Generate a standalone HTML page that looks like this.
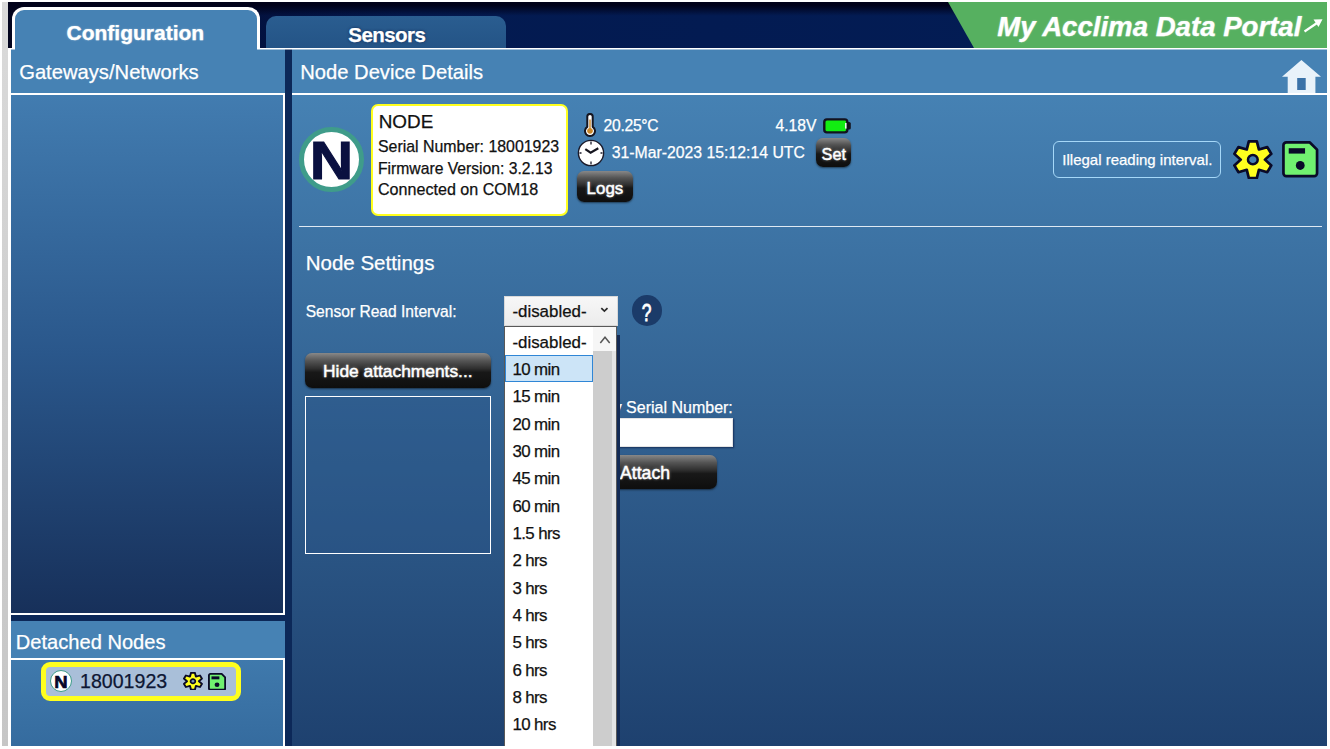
<!DOCTYPE html>
<html><head><meta charset="utf-8"><title>Acclima</title>
<style>
*{box-sizing:border-box;margin:0;padding:0}
html,body{width:1330px;height:749px;overflow:hidden;background:#fff}
body{position:relative;font-family:"Liberation Sans",sans-serif;color:#fff;-webkit-text-stroke:0.25px currentColor}
.abs{position:absolute}
.t{position:absolute;white-space:nowrap;line-height:1}
#strip{left:2px;top:2px;width:6px;height:744px;background:linear-gradient(#dadada,#d0d0d0 40%,#c6c6c6)}
#app{left:8px;top:2px;width:1319px;height:744px;background:#0c2858;overflow:hidden}
#topbar{left:0;top:0;width:1319px;height:46px;background:linear-gradient(180deg,#01021a 0,#01021a 7%,rgba(1,2,26,0) 30%),linear-gradient(90deg,#02041e 0%,#020c34 12%,#031a50 30%,#031d56 100%)}
#green{left:0;top:0;width:1319px;height:46px}
#tab1{left:4px;top:5px;width:247.5px;height:42px;border:3px solid #fff;border-bottom:none;border-radius:12px 12px 0 0;background:#4682b4}
#tab2{left:258px;top:14px;width:240px;height:32px;border-radius:10px 10px 0 0;background:linear-gradient(#2a5d90,#245486)}
.glow{text-shadow:0 0 2px rgba(255,255,255,.45)}
.hl{top:46px;height:2px;background:linear-gradient(#fff 0,#fff 50%,rgba(255,255,255,.5) 50%,rgba(255,255,255,.5) 100%)}
#left{left:0;top:46px;width:277px;height:567px;background:#4682b4;border-left:3px solid #fff}
#lbody{left:0;top:45px;width:274px;height:522px;border:solid #fff;border-width:2px 2px 2px 0;background:linear-gradient(#427cb0,#2a578b 50%,#17305a)}
#det{left:0;top:619px;width:277px;height:125px;background:#4682b4;border-left:3px solid #fff}
#dbody{left:0;top:37px;width:274px;height:90px;border-top:2px solid #fff;border-right:2px solid #fff;background:linear-gradient(#3f79ac,#356b9e)}
#main{left:284px;top:47px;width:1035px;height:697px;background:linear-gradient(#4682b4 0,#4682b4 40px,#1e416f 100%)}
.btn{position:absolute;border-radius:7px;background:linear-gradient(#888 0,#555 22%,#2e2e2e 45%,#181818 55%,#0e0e0e 100%);box-shadow:0 1px 2px rgba(0,0,0,.5)}
.btn .t{-webkit-text-stroke:0.45px #fff;text-shadow:0 0 3px rgba(255,255,255,.55)}
.dk{color:#111}
</style></head><body>
<div id="strip" class="abs"></div>
<div id="app" class="abs">
 <div id="topbar" class="abs"></div>
 <svg id="green" class="abs" viewBox="0 0 1319 46"><polygon points="940,0 1319,0 1319,46 966,46" fill="#56b060"/></svg>
 <div class="t glow" id="portal" style="left:989.2px;top:11px;font-size:27.6px;font-weight:bold;font-style:italic">My Acclima Data Portal</div>
 <svg class="abs" style="left:1295px;top:16px" width="21" height="15" viewBox="0 0 21 15"><path d="M1.5 13.5 L17 3" stroke="#fff" stroke-width="2.2" fill="none"/><path d="M10.5 1.5 L19.5 1.2 L15.5 9 Z" fill="#fff"/></svg>
 <div id="tab2" class="abs"></div>
 <div class="t glow" id="tsens" style="left:340.3px;top:23px;font-size:20.5px;font-weight:bold;letter-spacing:-0.55px;text-shadow:0 0 3px rgba(0,16,56,.7)">Sensors</div>
 <div id="left" class="abs">
   <div id="lbody" class="abs"></div>
 </div>
 <div class="t" id="tgw" style="left:11.2px;top:60px;font-size:20.2px">Gateways/Networks</div>
 <div id="tab1" class="abs"></div>
 <div class="t glow" id="tconf" style="left:58.5px;top:20px;font-size:21px;font-weight:bold">Configuration</div>
 <div id="det" class="abs">
   <div id="dbody" class="abs"></div>
 </div>
 <div class="t" id="tdet" style="left:7.8px;top:630px;font-size:20.1px">Detached Nodes</div>
 <!-- detached node item -->
 <div class="abs" id="dnode" style="left:33px;top:660px;width:200px;height:38.5px;border:5px solid #ffff1e;border-radius:9px;background:#a9bfd9"></div>
 <div class="abs" style="left:42px;top:668.3px;width:22px;height:22px;border-radius:50%;background:#fff;border:1.5px solid #3f9c8a"></div>
 <div class="t" id="sn" style="left:46.6px;top:671.5px;font-size:16.5px;font-weight:bold;color:#06062a;-webkit-text-stroke:0.6px #06062a;transform:scaleX(1.12)">N</div>
 <div class="t dk" id="tsn" style="color:#0e1734;left:72px;top:670px;font-size:19.6px">18001923</div>
 <svg class="abs" style="left:174.7px;top:669.7px" width="19.9" height="18.5" viewBox="-19.3 -19.8 38.6 39.6" preserveAspectRatio="none"><use href="#gear2"/></svg>
 <svg class="abs" style="left:199.5px;top:670.6px" width="18.1" height="17.6" viewBox="-0.5 -0.5 39 39" preserveAspectRatio="none"><use href="#save2"/></svg>

 <div class="abs" style="left:0;top:46px;width:3px;height:698px;background:#fff"></div>
 <div id="main" class="abs">
  <!-- coordinates in main = page - (292,49) -->
  <div class="t" id="tndd" style="left:8.2px;top:13px;font-size:20.2px">Node Device Details</div>
  <svg class="abs" style="left:989px;top:10px" width="41" height="36" viewBox="0 0 41 36"><path d="M20.4 1 L40 17.7 L34.4 17.7 L34.4 35 L6.7 35 L6.7 17.7 L1 17.7 Z" fill="#e8f2fa"/><rect x="16.2" y="19" width="8.5" height="12" fill="#3a72a8"/></svg>
  <div class="abs" style="left:0;top:44px;width:1035px;height:2px;background:#fff"></div>
  <!-- N logo -->
  <div class="abs" style="left:7px;top:78px;width:65px;height:65px;border-radius:50%;background:#fff;border:5px solid #3f9c8a"></div>
  <div class="t" id="bigN" style="left:21px;top:85.8px;font-size:51px;font-weight:bold;color:#0a1040;-webkit-text-stroke:1px #0a1040;transform:scale(1.18,1.04);transform-origin:50% 50%">N</div>
  <!-- node info -->
  <div class="abs" style="left:79px;top:55px;width:197px;height:112px;border:2px solid #ffff1e;border-radius:7px;background:#fff"></div>
  <div class="t dk" id="tnode" style="left:86.7px;top:64px;font-size:18.9px">NODE</div>
  <div class="t dk" id="tser" style="left:86px;top:90px;font-size:15.9px">Serial Number: 18001923</div>
  <div class="t dk" id="tfw" style="left:86px;top:112px;font-size:15.7px">Firmware Version: 3.2.13</div>
  <div class="t dk" id="tcon" style="left:86px;top:132px;font-size:16.1px">Connected on COM18</div>
  <!-- thermometer -->
  <svg class="abs" style="left:291px;top:64px" width="14" height="24" viewBox="0 0 14 24"><path d="M4.3 3.6 a2.7 2.7 0 0 1 5.4 0 V13.8 a5 5 0 1 1 -5.4 0 Z" fill="#fff" stroke="#15151f" stroke-width="2"/><path d="M6.3 6.5 h1.4 V15 a2.9 2.9 0 1 1 -1.4 0 Z" fill="#c8862a"/></svg>
  <div class="t" id="ttemp" style="left:311.6px;top:69px;font-size:15.7px;letter-spacing:-0.3px">20.25°C</div>
  <!-- clock -->
  <svg class="abs" style="left:285px;top:90px" width="28" height="28" viewBox="0 0 28 28"><circle cx="14" cy="14" r="12.6" fill="#fff" stroke="#1a1a2a" stroke-width="1.4"/><path d="M14 2.5v3M14 22.5v3M2.5 14h2M23.5 14h2" stroke="#1a1a2a" stroke-width="1.3"/><path d="M8.3 10.2 L13.6 13.7 L21.3 9.3" fill="none" stroke="#15151f" stroke-width="2.2"/></svg>
  <div class="t" id="tdate" style="left:319.7px;top:96px;font-size:15.8px">31-Mar-2023 15:12:14 UTC</div>
  <div class="t" id="tvolt" style="left:483.5px;top:69px;font-size:15.7px">4.18V</div>
  <!-- battery -->
  <svg class="abs" style="left:531px;top:69px" width="29" height="16" viewBox="0 0 29 16"><rect x="23.5" y="4" width="4.3" height="7.6" rx="1.6" fill="#15151f"/><rect x="1.3" y="1.4" width="23" height="13" rx="2.6" fill="#12ee12" stroke="#12121f" stroke-width="2.4"/><rect x="22" y="5" width="1.6" height="5.6" fill="#e8f6e8"/></svg>
  <div class="btn" style="left:524px;top:89px;width:35px;height:29px"><div class="t" id="tset" style="left:5.6px;top:8px;font-size:16.2px">Set</div></div>
  <div class="btn" style="left:285px;top:122px;width:56px;height:31px"><div class="t" id="tlogs" style="left:9.6px;top:10px;font-size:16.9px">Logs</div></div>
  <!-- illegal -->
  <div class="abs" style="left:761px;top:92px;width:168px;height:37px;border:1.5px solid #a6d8f8;border-radius:6px"></div>
  <div class="t" id="till" style="left:770.3px;top:103px;font-size:15px">Illegal reading interval.</div>
  <svg class="abs" style="left:941px;top:91px" width="39.7" height="39.3" viewBox="-18.8 -19.3 37.6 38.6" preserveAspectRatio="none"><use href="#gear"/></svg>
  <svg class="abs" style="left:990.3px;top:92.2px" width="36.5" height="36.5" viewBox="0 0 38 38"><use href="#save"/></svg>
  <div class="abs" style="left:7px;top:177px;width:1023px;height:1px;background:#dfe9f3"></div>
  <!-- settings -->
  <div class="t" id="tns" style="left:13.7px;top:204px;font-size:20.5px">Node Settings</div>
  <div class="t" id="tsri" style="left:13.7px;top:255px;font-size:15.6px">Sensor Read Interval:</div>
  <div class="abs" style="left:339.8px;top:246.3px;width:30.6px;height:30.6px;border-radius:50%;background:#1b3b69"></div>
  <div class="t" id="tq" style="left:347.7px;top:253px;font-size:23.5px;transform:scaleX(.74);-webkit-text-stroke:0.8px #fff">?</div>
  <div class="btn" style="left:13px;top:304px;width:186px;height:35px"><div class="t" id="thide" style="left:18.1px;top:10px;font-size:17.35px">Hide attachments...</div></div>
  <div class="abs" style="left:13px;top:347px;width:186px;height:158px;border:1.5px solid #fff;background:rgba(40,84,134,.35)"></div>
  <div class="t" id="tabs" style="right:594.2px;top:351px;font-size:16px">Attach by Serial Number:</div>
  <div class="abs" style="left:270px;top:369px;width:171px;height:29px;background:#fff;border:1px solid #e4e4e4;box-shadow:1px 1px 1.5px rgba(0,10,50,.55)"></div>
  <div class="btn" style="left:270px;top:406px;width:154.5px;height:33.5px"><div class="t" id="tatt" style="left:58.1px;top:10px;font-size:17.6px">Attach</div></div>
  <!-- select -->
  <div class="abs" style="left:212px;top:247px;width:114px;height:30px;background:linear-gradient(#f7f7f7,#ececec);border:1px solid #d9d9d9"></div>
  <div class="t dk" id="tsel" style="left:220.4px;top:255px;font-size:16.9px">-disabled-</div>
  <svg class="abs" style="left:308px;top:258px" width="10" height="8" viewBox="0 0 10 8"><path d="M1.3 1.1 L4.4 4.1 L7.5 1.1" fill="none" stroke="#2a2a2a" stroke-width="1.7"/></svg>
  <!-- dropdown -->
  <div class="abs" style="left:325.3px;top:286px;width:2.3px;height:420px;background:#132a54"></div>
  <div class="abs" id="dd" style="left:212px;top:277px;width:113.3px;height:430px;background:#585858"></div>
  <div class="abs" style="left:213px;top:278px;width:88px;height:430px;background:#fff"></div>
  <div class="abs" style="left:301px;top:278px;width:23.3px;height:430px;background:#e4e4e4"></div>
  <div class="abs" style="left:301px;top:278px;width:19.3px;height:430px;background:#cdcdcd"></div>
  <div class="abs" style="left:301px;top:278px;width:23.3px;height:24px;background:#f6f6f6"></div>
  <svg class="abs" style="left:307px;top:285.5px" width="12" height="10" viewBox="0 0 12 10"><path d="M1.3 8 L6 2.3 L10.7 8" fill="none" stroke="#555" stroke-width="1.5"/></svg>
  <div class="abs" style="left:213.4px;top:306.2px;width:87.3px;height:27px;background:#cce4f7;border:1px solid #2f86d6"></div>
  <div id="items" class="dk">
   <div class="t" style="left:220.4px;top:286px">-disabled-</div>
   <div class="t" style="left:220.4px;top:313px">10 min</div>
   <div class="t" style="left:220.4px;top:340px">15 min</div>
   <div class="t" style="left:220.4px;top:368px">20 min</div>
   <div class="t" style="left:220.4px;top:395px">30 min</div>
   <div class="t" style="left:220.4px;top:422px">45 min</div>
   <div class="t" style="left:220.4px;top:450px">60 min</div>
   <div class="t" style="left:220.4px;top:477px">1.5 hrs</div>
   <div class="t" style="left:220.4px;top:504px">2 hrs</div>
   <div class="t" style="left:220.4px;top:532px">3 hrs</div>
   <div class="t" style="left:220.4px;top:559px">4 hrs</div>
   <div class="t" style="left:220.4px;top:586px">5 hrs</div>
   <div class="t" style="left:220.4px;top:614px">6 hrs</div>
   <div class="t" style="left:220.4px;top:641px">8 hrs</div>
   <div class="t" style="left:220.4px;top:668px">10 hrs</div>
  </div>
 </div>
 <div class="abs hl" style="left:249px;width:1070px"></div>
 <div class="abs hl" style="left:0;width:7px"></div>
</div>
<svg width="0" height="0" style="position:absolute"><defs>
 <g id="gear"><path d="M-3.80 -18.00 L3.80 -18.00 L5.75 -9.96 L13.69 -12.29 L17.49 -5.71 L11.50 -0.00 L17.49 5.71 L13.69 12.29 L5.75 9.96 L3.80 18.00 L-3.80 18.00 L-5.75 9.96 L-13.69 12.29 L-17.49 5.71 L-11.50 0.00 L-17.49 -5.71 L-13.69 -12.29 L-5.75 -9.96 Z" fill="#ffff1e" stroke="#0a0a28" stroke-width="2.6" stroke-linejoin="round"/><circle r="4.6" fill="#4682b4" stroke="#0a0a28" stroke-width="2.4"/></g>
 <g id="save"><path d="M4.5 1.5 H29 L36.5 9 V33.5 a3 3 0 0 1 -3 3 H4.5 a3 3 0 0 1 -3 -3 V4.5 a3 3 0 0 1 3 -3 Z" fill="#70f070" stroke="#0a0a28" stroke-width="2.8" stroke-linejoin="round"/><rect x="7" y="7.5" width="17" height="5.6" fill="#0a0a28"/><circle cx="19" cy="25.5" r="4.6" fill="#0a0a28"/></g>
 <g id="gear2"><path d="M-3.80 -18.00 L3.80 -18.00 L5.75 -9.96 L13.69 -12.29 L17.49 -5.71 L11.50 -0.00 L17.49 5.71 L13.69 12.29 L5.75 9.96 L3.80 18.00 L-3.80 18.00 L-5.75 9.96 L-13.69 12.29 L-17.49 5.71 L-11.50 0.00 L-17.49 -5.71 L-13.69 -12.29 L-5.75 -9.96 Z" fill="#ffff1e" stroke="#0a0a28" stroke-width="3.8" stroke-linejoin="round"/><circle r="4.6" fill="#7a93b5" stroke="#0a0a28" stroke-width="3.4"/></g>
 <g id="save2"><path d="M4.5 1.5 H29 L36.5 9 V33.5 a3 3 0 0 1 -3 3 H4.5 a3 3 0 0 1 -3 -3 V4.5 a3 3 0 0 1 3 -3 Z" fill="#70f070" stroke="#0a0a28" stroke-width="4" stroke-linejoin="round"/><rect x="7" y="7" width="17" height="6.5" fill="#0a0a28"/><circle cx="19" cy="25.5" r="5.2" fill="#0a0a28"/></g>
</defs></svg>
<style>#items .t{font-size:16.9px;letter-spacing:-0.6px}#items .t:first-child{letter-spacing:0}</style>
</body></html>
